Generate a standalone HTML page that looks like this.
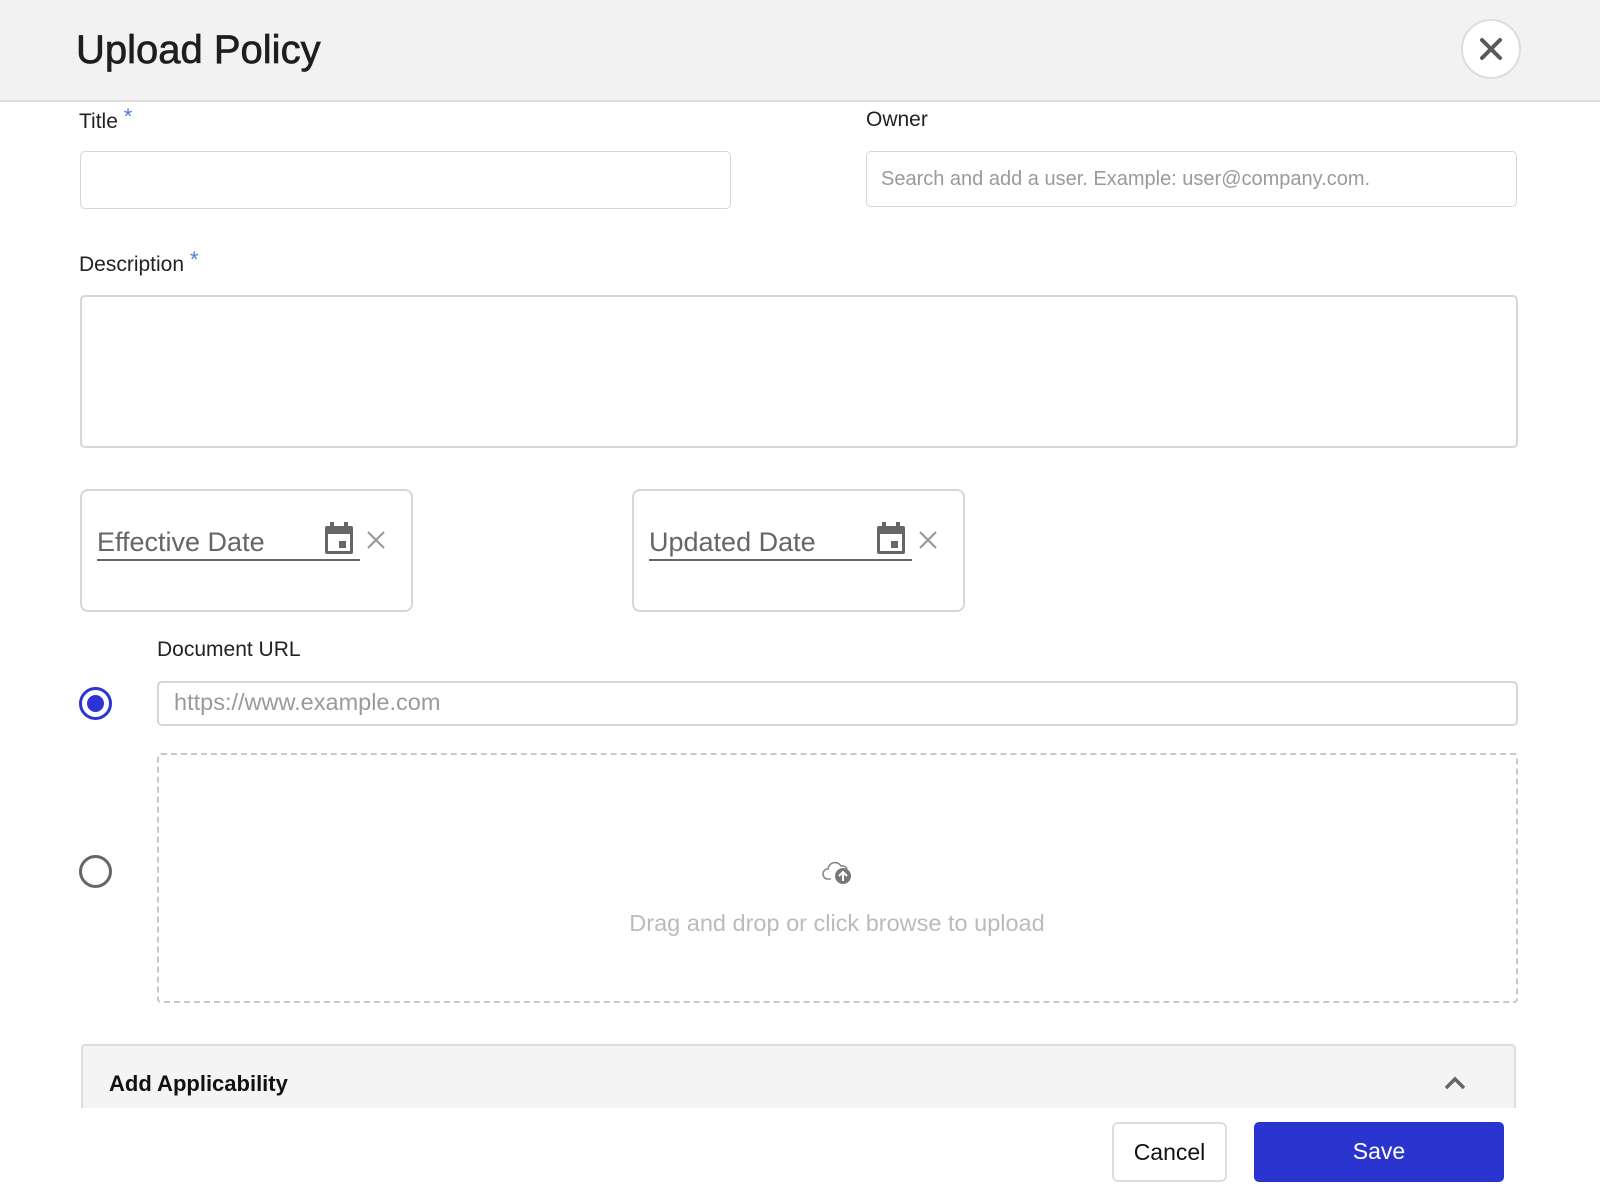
<!DOCTYPE html>
<html><head><meta charset="utf-8"><style>
*{box-sizing:border-box;margin:0;padding:0}
body{width:1600px;height:1192px;background:#fff;font-family:"Liberation Sans",Roboto,sans-serif;position:relative;overflow:hidden;color:#222}
.a{position:absolute}
.hdr{left:0;top:0;width:1600px;height:102px;background:#f2f2f2;border-bottom:2px solid #ddd}
.inp{border:1px solid #d6d6d6;border-radius:5px;background:#fff}
.lbl{font-size:21px;color:#222}
.star{color:#4a7bd8;font-size:22px;position:relative;top:-4px}
.ph{color:#9a9a9a;font-size:20px}
</style></head><body>
<div class="a hdr"></div>
<div class="a" style="left:76px;top:28px;font-size:40px;color:#1e1e1e;-webkit-text-stroke:0.7px #1e1e1e">Upload Policy</div>
<div class="a" style="left:1461px;top:19px;width:60px;height:60px;border-radius:50%;background:#fff;border:2px solid #ddd"></div>
<svg class="a" style="left:1478px;top:36px" width="26" height="26" viewBox="0 0 26 26"><path d="M4 4L22 22M22 4L4 22" stroke="#5a5a5a" stroke-width="4" stroke-linecap="round"/></svg>

<div class="a lbl" style="left:79px;top:108px">Title <span class="star">*</span></div>
<div class="a inp" style="left:80px;top:151px;width:651px;height:58px"></div>
<div class="a lbl" style="left:866px;top:108px">Owner</div>
<div class="a inp" style="left:866px;top:151px;width:651px;height:56px"></div>
<div class="a ph" style="left:881px;top:168px">Search and add a user. Example: user@company.com.</div>

<div class="a lbl" style="left:79px;top:251px">Description <span class="star">*</span></div>
<div class="a inp" style="left:80px;top:295px;width:1438px;height:153px;border-width:2px"></div>

<div class="a inp" style="left:80px;top:489px;width:333px;height:123px;border-width:2px;border-radius:8px"></div>
<div class="a" style="left:97px;top:527px;font-size:27px;color:#666">Effective Date</div>
<div class="a" style="left:97px;top:559px;width:263px;height:2px;background:#666"></div>
<svg class="a" style="left:323px;top:520px" width="32" height="36" viewBox="0 0 32 36"><rect x="2" y="6" width="28" height="28" rx="2" fill="#666"/><rect x="5" y="14" width="22" height="17" fill="#fff"/><rect x="7" y="2" width="4" height="6" fill="#666"/><rect x="21" y="2" width="4" height="6" fill="#666"/><rect x="16" y="21" width="7" height="7" fill="#666"/></svg>
<svg class="a" style="left:366px;top:530px" width="20" height="20" viewBox="0 0 20 20"><path d="M2 2L18 18M18 2L2 18" stroke="#999" stroke-width="2.2"/></svg>

<div class="a inp" style="left:632px;top:489px;width:333px;height:123px;border-width:2px;border-radius:8px"></div>
<div class="a" style="left:649px;top:527px;font-size:27px;color:#666">Updated Date</div>
<div class="a" style="left:649px;top:559px;width:263px;height:2px;background:#666"></div>
<svg class="a" style="left:875px;top:520px" width="32" height="36" viewBox="0 0 32 36"><rect x="2" y="6" width="28" height="28" rx="2" fill="#666"/><rect x="5" y="14" width="22" height="17" fill="#fff"/><rect x="7" y="2" width="4" height="6" fill="#666"/><rect x="21" y="2" width="4" height="6" fill="#666"/><rect x="16" y="21" width="7" height="7" fill="#666"/></svg>
<svg class="a" style="left:918px;top:530px" width="20" height="20" viewBox="0 0 20 20"><path d="M2 2L18 18M18 2L2 18" stroke="#999" stroke-width="2.2"/></svg>

<div class="a lbl" style="left:157px;top:638px;font-size:21px">Document URL</div>
<div class="a" style="left:79px;top:687px;width:33px;height:33px;border-radius:50%;border:3px solid #2b35d4"></div>
<div class="a" style="left:87px;top:695px;width:17px;height:17px;border-radius:50%;background:#2b35d4"></div>
<div class="a inp" style="left:157px;top:681px;width:1361px;height:45px;border-width:2px"></div>
<div class="a" style="left:174px;top:689px;font-size:23.5px;color:#9a9a9a">https://www.example.com</div>

<div class="a" style="left:79px;top:855px;width:33px;height:33px;border-radius:50%;border:3px solid #666"></div>
<div class="a" style="left:157px;top:753px;width:1361px;height:250px;border:2px dashed #c8c8c8;border-radius:4px"></div>
<svg class="a" style="left:822px;top:857px" width="32" height="28" viewBox="0 0 32 28"><path d="M9 22H6a5 5 0 0 1 0-10a7 7 0 0 1 13-3a5 5 0 0 1 6 3" fill="none" stroke="#888" stroke-width="1.6"/><circle cx="21" cy="19" r="8" fill="#777"/><path d="M21 24V15M17 19l4-4 4 4" stroke="#fff" stroke-width="2" fill="none"/></svg>
<div class="a" style="left:0;width:1674px;text-align:center;top:910px;font-size:23.5px;color:#bbb">Drag and drop or click browse to upload</div>

<div class="a" style="left:81px;top:1044px;width:1435px;height:64px;background:#f4f4f4;border:2px solid #ddd;border-bottom:none;border-radius:4px 4px 0 0"></div>
<div class="a" style="left:109px;top:1071px;font-size:22px;font-weight:bold;color:#111">Add Applicability</div>
<svg class="a" style="left:1443px;top:1075px" width="24" height="16" viewBox="0 0 24 16"><path d="M3 13L12 4L21 13" stroke="#666" stroke-width="3.5" fill="none"/></svg>

<div class="a" style="left:1112px;top:1122px;width:115px;height:60px;border:2px solid #ddd;border-radius:6px;background:#fff;font-size:23px;color:#111;text-align:center;line-height:56px">Cancel</div>
<div class="a" style="left:1254px;top:1122px;width:250px;height:60px;border-radius:5px;background:#2a35d0;color:#fff;font-size:23px;text-align:center;line-height:58px">Save</div>
</body></html>
